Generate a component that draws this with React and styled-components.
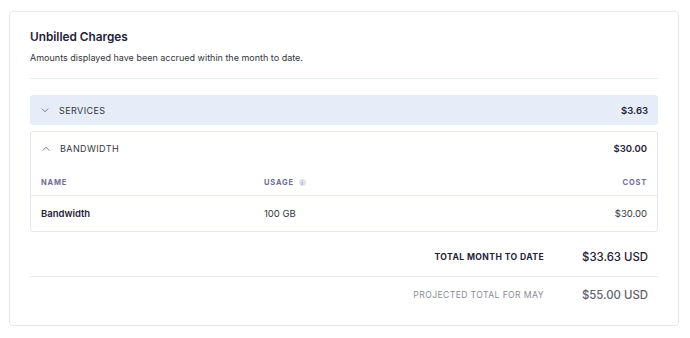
import React from 'react'
import styled, { createGlobalStyle } from 'styled-components'

const GlobalStyle = createGlobalStyle`
    body {
        margin: 0;
        background: #ffffff;
        font-family: 'Inter', 'Noto Sans', sans-serif;
        color: #32363c;
    }
`;

// 바깥 카드
const Card = styled.section`
    box-sizing: border-box;
    width: 670px;
    height: 315px;
    margin: 11px 0 0 9px;
    padding: 17px 20px 0 20px;
    border: 1px solid #e3e7f1;
    border-radius: 4px;
    background: #fff;
`;

const Title = styled.h2`
    margin: 0;
    font-size: 11.8px;
    font-weight: 600;
    color: #1f2137;
    line-height: 16px;
`;

const Subtitle = styled.p`
    margin: 6px 0 0 0;
    font-size: 9px;
    line-height: 13px;
    color: #32363c;
`;

const Divider = styled.hr`
    border: none;
    border-top: 1px solid #e8ecf5;
    margin: ${props => props.$top || 0}px 0 0 0;
`;

// 접히는 섹션 머리
const GroupBar = styled.div`
    display: flex;
    align-items: center;
    height: ${props => props.$height}px;
    padding: 0 10px 0 11px;
    background: ${props => props.$filled ? '#e7edf8' : 'transparent'};
    border-radius: 3px;
    margin-top: ${props => props.$top || 0}px;
`;

const GroupLabel = styled.span`
    margin-left: 10px;
    font-size: 9px;
    letter-spacing: 0.4px;
    color: #32363c;
`;

const Spacer = styled.div`
    margin-left: auto;
`;

const Amount = styled.span`
    font-size: 9.5px;
    font-weight: 600;
    color: #1f2137;
`;

const Panel = styled.div`
    margin-top: 6px;
    border: 1px solid #e3e8f3;
    border-radius: 3px;
`;

const TableRow = styled.div`
    box-sizing: border-box;
    display: grid;
    grid-template-columns: 223px 1fr auto;
    align-items: center;
    height: ${props => props.$height}px;
    padding: ${props => props.$shift || 0}px 10px 0 10px;
    border-top: ${props => props.$divider ? '1px solid #e6eaf4' : 'none'};
`;

const HeadCell = styled.span`
    display: flex;
    align-items: center;
    gap: 5px;
    font-size: 7.5px;
    font-weight: 700;
    letter-spacing: 0.8px;
    color: #6e6c99;
    justify-content: ${props => props.$right ? 'flex-end' : 'flex-start'};
`;

const Cell = styled.span`
    font-size: 9.5px;
    font-weight: ${props => props.$bold ? 600 : 400};
    color: ${props => props.$bold ? '#1f2137' : '#32363c'};
    text-align: ${props => props.$right ? 'right' : 'left'};
`;

const InfoDot = styled.span`
    display: inline-flex;
    align-items: center;
    justify-content: center;
    width: 7px;
    height: 7px;
    border-radius: 50%;
    background: #dfe3f1;
    color: #8a8fb8;
    font-size: 5px;
    font-weight: 700;
    letter-spacing: 0;
`;

// 합계 줄
const TotalRow = styled.div`
    box-sizing: border-box;
    display: flex;
    align-items: center;
    justify-content: flex-end;
    height: ${props => props.$height}px;
    padding: ${props => props.$shift || 0}px 10px 0 0;
`;

const TotalLabel = styled.span`
    font-size: 8.6px;
    letter-spacing: 0.4px;
    font-weight: ${props => props.$muted ? 400 : 700};
    color: ${props => props.$muted ? '#8a8c96' : '#1f2137'};
    margin-right: 38px;
`;

const TotalValue = styled.span`
    font-size: 11.4px;
    font-weight: 500;
    color: ${props => props.$muted ? '#5f6270' : '#1f2137'};
`;

const Chevron = ({ up }) => (
    <svg width="8" height="5" viewBox="0 0 8 5" fill="none">
        <path
            d={up ? 'M1 4.2 L4 1.2 L7 4.2' : 'M1 0.8 L4 3.8 L7 0.8'}
            stroke="#6b7083"
            strokeWidth="0.9"
            strokeLinecap="round"
            strokeLinejoin="round"
        />
    </svg>
);

const App = () => {
    return (
        <>
            <GlobalStyle />
            <Card>
                <Title>Unbilled Charges</Title>
                <Subtitle>Amounts displayed have been accrued within the month to date.</Subtitle>
                <Divider $top={14} />

                <GroupBar $filled $height={30} $top={16}>
                    <Chevron />
                    <GroupLabel>SERVICES</GroupLabel>
                    <Spacer />
                    <Amount>$3.63</Amount>
                </GroupBar>

                <Panel>
                    <GroupBar $height={32}>
                        <Chevron up />
                        <GroupLabel>BANDWIDTH</GroupLabel>
                        <Spacer />
                        <Amount>$30.00</Amount>
                    </GroupBar>
                    <TableRow $height={31} $shift={6}>
                        <HeadCell>NAME</HeadCell>
                        <HeadCell>USAGE <InfoDot>i</InfoDot></HeadCell>
                        <HeadCell $right>COST</HeadCell>
                    </TableRow>
                    <TableRow $divider $height={36}>
                        <Cell $bold>Bandwidth</Cell>
                        <Cell>100 GB</Cell>
                        <Cell $right>$30.00</Cell>
                    </TableRow>
                </Panel>

                <TotalRow $height={44} $shift={6}>
                    <TotalLabel>TOTAL MONTH TO DATE</TotalLabel>
                    <TotalValue>$33.63 USD</TotalValue>
                </TotalRow>
                <Divider />
                <TotalRow $height={36}>
                    <TotalLabel $muted>PROJECTED TOTAL FOR MAY</TotalLabel>
                    <TotalValue $muted>$55.00 USD</TotalValue>
                </TotalRow>
            </Card>
        </>
    )
}

export default App
